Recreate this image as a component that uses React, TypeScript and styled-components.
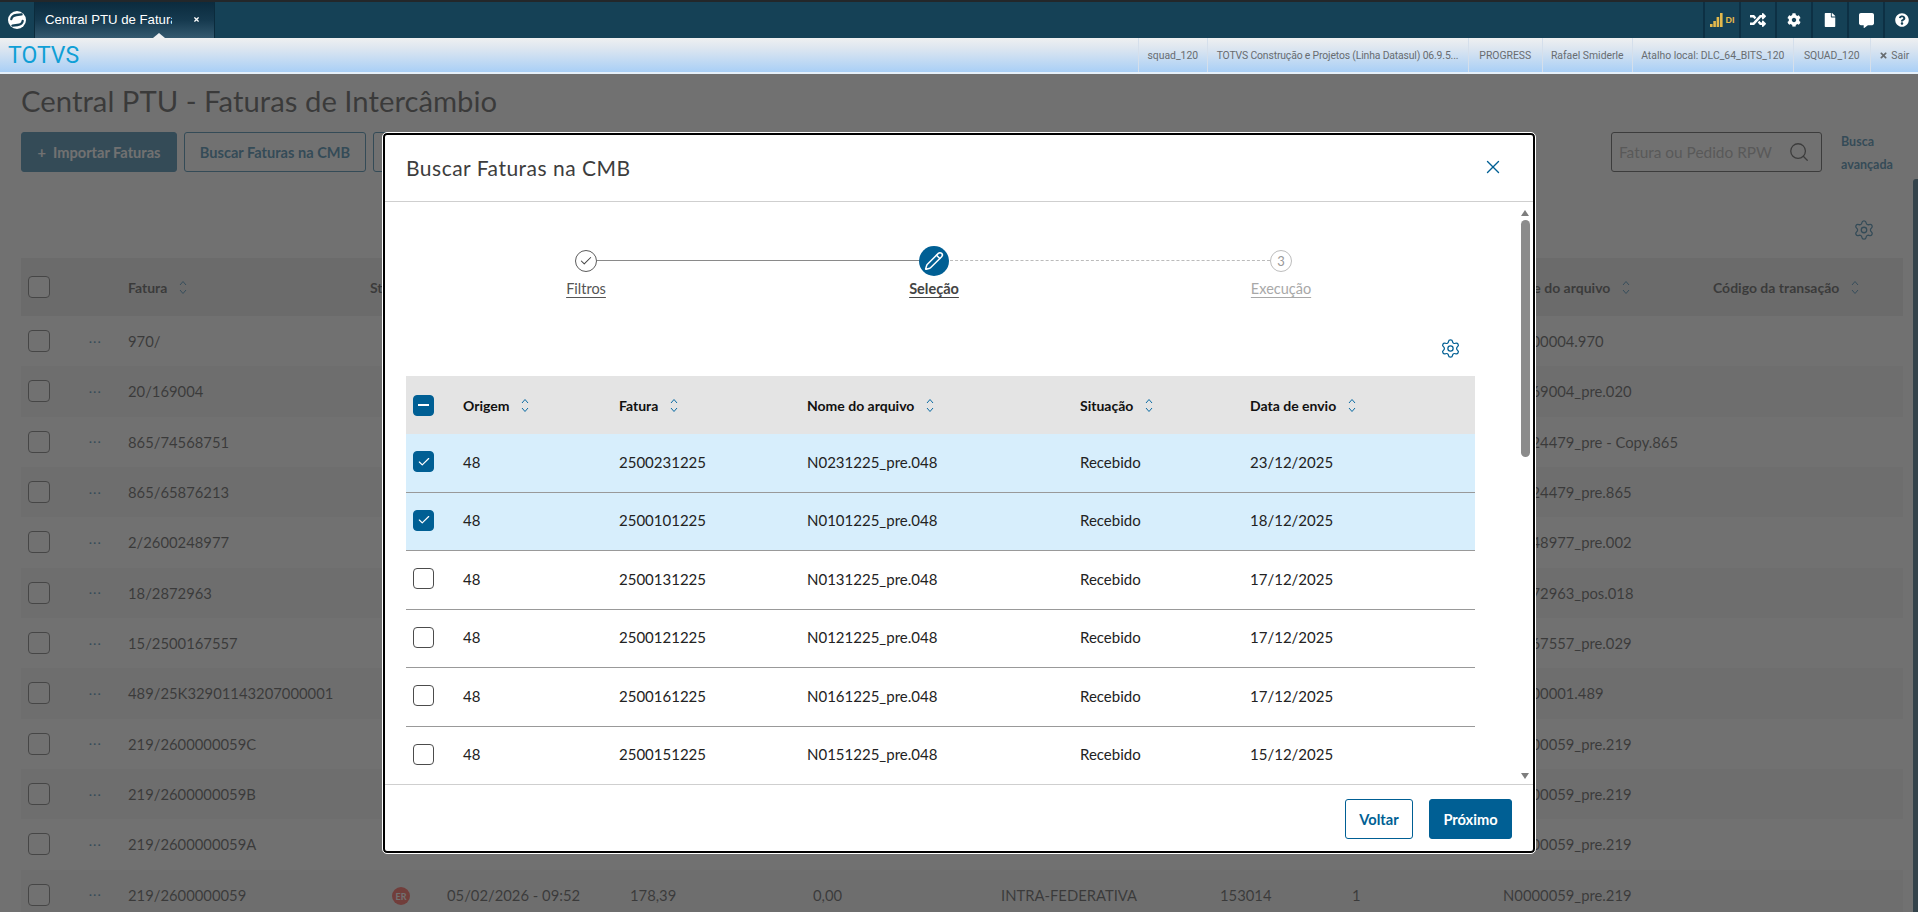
import React from "react";
import styled, { createGlobalStyle } from "styled-components";
import { Check, Pencil, Search, Settings, X } from "lucide-react";
import { FaRandom, FaCog, FaFile, FaCommentAlt, FaQuestionCircle, FaTimes } from "react-icons/fa";

const Global = createGlobalStyle`
  html, body { margin: 0; padding: 0; height: 100%; overflow: hidden; background: #fff; }
  * { box-sizing: border-box; }
  body { font-family: "Lato", "Noto Sans", sans-serif; color: #1c1c1c; }
`;

const Shell = styled.div`
  position: relative;
  width: 1918px;
  height: 912px;
  overflow: hidden;
  display: flex;
  flex-direction: column;
`;

const TopBar = styled.header`
  flex: 0 0 38px;
  display: flex;
  align-items: stretch;
  background: #154156;
  border-top: 2px solid #23272a;
`;

const LogoCell = styled.div`
  width: 35px;
  display: flex;
  align-items: center;
  justify-content: center;
  border-right: 1px solid #0b2b3c;
`;

const Tab = styled.div`
  position: relative;
  width: 180px;
  display: flex;
  align-items: center;
  padding: 0 0 2px 10px;
  background: linear-gradient(180deg, #0b2b3e 0%, #15394e 50%, #34596f 100%);
  border-right: 1px solid #0b2b3c;
  color: #fff;
  font: 13.2px "Liberation Sans", sans-serif;
  &::after {
    content: "";
    position: absolute;
    left: 118px;
    bottom: 0;
    border-left: 6px solid transparent;
    border-right: 6px solid transparent;
    border-bottom: 5px solid #eef0f2;
  }
`;

const TabLabel = styled.span`
  width: 127px;
  overflow: hidden;
  white-space: nowrap;
`;

const TabClose = styled.span`
  margin-left: 21px;
  display: flex;
`;

const TopSpacer = styled.div`
  flex: 1;
`;

const TopIcon = styled.div<{ $w: number }>`
  width: ${(p) => p.$w}px;
  display: flex;
  align-items: center;
  justify-content: center;
  gap: 3px;
  color: #fff;
  border-left: 2px solid #0d3044;
`;

const SignalText = styled.span`
  color: #e3b94d;
  font: bold 9px "Liberation Sans", sans-serif;
`;

const SubBar = styled.div`
  flex: 0 0 36px;
  display: flex;
  align-items: stretch;
  background: linear-gradient(180deg, #eff0f1 0%, #dde6f0 30%, #a9cff6 100%);
  border-bottom: 2px solid #e6f0fa;
`;

const Brand = styled.div`
  flex: 1;
  padding: 2px 0 0 8px;
  color: #0f9fd6;
  font: 23px/32px "Roboto", "Liberation Sans", sans-serif;
`;

const InfoCell = styled.div<{ $w: number; $tight?: boolean }>`
  width: ${(p) => p.$w}px;
  display: flex;
  align-items: center;
  justify-content: center;
  gap: 3px;
  white-space: nowrap;
  border-left: 1px solid #d5dfeb;
  color: #686c70;
  letter-spacing: ${(p) => (p.$tight ? "-0.15px" : "0")};
  font: 10.4px "Roboto", "Liberation Sans", sans-serif;
`;

const Page = styled.main`
  flex: 1;
  padding: 0 15px 0 21px;
  background: #fff;
  min-height: 0;
`;

const Title = styled.h1`
  margin: 6px 0 0;
  font: 400 29.3px/42px "Lato", sans-serif;
  color: #1c1c1c;
`;

const ActionRow = styled.div`
  margin-top: 10px;
  height: 40px;
  display: flex;
  align-items: stretch;
`;

const PageButton = styled.button<{ $primary?: boolean; $w: number }>`
  width: ${(p) => p.$w}px;
  margin-right: 7px;
  padding: 0;
  border-radius: 3px;
  border: 1px solid #005f94;
  background: ${(p) => (p.$primary ? "#005f94" : "#fff")};
  color: ${(p) => (p.$primary ? "#fff" : "#005f94")};
  font: 700 14.6px "Lato", sans-serif;
`;

const ActionSpacer = styled.div`
  flex: 1;
`;

const SearchBox = styled.div`
  width: 211px;
  margin-right: 19px;
  display: flex;
  align-items: center;
  justify-content: space-between;
  padding: 0 11px 0 7px;
  border: 1px solid #222;
  border-radius: 3px;
  color: #9a9a9a;
  font: 15.4px "Lato", sans-serif;
`;

const AdvancedLink = styled.div`
  width: 62px;
  margin-top: -2px;
  color: #005f94;
  font: 700 12.5px/23px "Lato", sans-serif;
`;

const GearRow = styled.div<{ $top: number; $pad: number; $h: number }>`
  display: flex;
  justify-content: flex-end;
  align-items: flex-start;
  height: ${(p) => p.$h}px;
  padding-top: ${(p) => p.$top}px;
  padding-right: ${(p) => p.$pad}px;
  color: #005f94;
`;

const BgGrid = "68px 39px 242px 77px 183px 183px 188px 219px 132px 151px 210px 190px";

const BgHead = styled.div`
  display: grid;
  grid-template-columns: ${BgGrid};
  align-items: center;
  height: 58px;
  background: #e4e4e4;
  font: 700 14px "Lato", sans-serif;
`;

const BgRow = styled.div<{ $even: boolean }>`
  display: grid;
  grid-template-columns: ${BgGrid};
  align-items: center;
  height: 50.33px;
  background: ${(p) => (p.$even ? "#f3f3f3" : "#fff")};
  font: 14.8px "Lato", sans-serif;
`;

const BgCheckCell = styled.div`
  padding-left: 7px;
  display: flex;
`;

const BgDots = styled.div`
  color: #005f94;
  font: 700 12px/12px "Lato", sans-serif;
  letter-spacing: 1.5px;
  margin-top: -5px;
`;

const Cell = styled.div`
  white-space: nowrap;
`;

const SortWrap = styled.span`
  display: inline-flex;
  align-items: center;
  gap: 12px;
  white-space: nowrap;
`;

const Badge = styled.span`
  display: inline-flex;
  align-items: center;
  justify-content: center;
  width: 18px;
  height: 18px;
  margin-left: 22px;
  border-radius: 50%;
  background: #ff2a20;
  color: #fff;
  font: 700 9px "Lato", sans-serif;
`;

const Box = styled.span<{ $on?: boolean; $size: number }>`
  width: ${(p) => p.$size}px;
  height: ${(p) => p.$size}px;
  display: inline-flex;
  align-items: center;
  justify-content: center;
  flex: none;
  border-radius: 4px;
  border: 1px solid ${(p) => (p.$on ? "#005f94" : "#4c4c4c")};
  background: ${(p) => (p.$on ? "#005f94" : "#fff")};
  color: #fff;
`;

const Minus = styled.span`
  width: 11px;
  height: 2px;
  background: #fff;
`;

const PageScroll = styled.div`
  position: absolute;
  right: 0;
  top: 179px;
  bottom: 0;
  width: 5px;
  background: #00405f;
  border-radius: 3px 0 0 0;
`;

const Backdrop = styled.div`
  position: absolute;
  left: 0;
  right: 0;
  top: 74px;
  bottom: 0;
  background: rgba(68, 68, 68, 0.76);
`;

const Modal = styled.section`
  position: absolute;
  left: 383px;
  top: 133px;
  width: 1152px;
  height: 720px;
  display: flex;
  flex-direction: column;
  background: #fff;
  border: 2px solid #000;
  border-radius: 4px;
  outline: 1px solid #fff;
`;

const ModalHead = styled.div`
  flex: 0 0 67px;
  display: flex;
  align-items: center;
  justify-content: space-between;
  padding: 0 29px 2px 21px;
  border-bottom: 1px solid #cfcfcf;
  font: 400 21px "Lato", sans-serif;
  color: #3d3d3d;
  letter-spacing: .5px;
`;

const CloseIcon = styled.span`
  display: flex;
  color: #005f94;
`;

const ModalBody = styled.div`
  position: relative;
  flex: 1;
  min-height: 0;
  overflow: hidden;
  padding: 0 58px 0 21px;
`;

const Stepper = styled.div`
  display: flex;
  align-items: flex-start;
  padding: 44px 0 0 169px;
  height: 136px;
`;

const Step = styled.div`
  position: relative;
  flex: none;
  width: 22px;
  display: flex;
  flex-direction: column;
  align-items: center;
`;

const StepCircle = styled.span<{ $kind: "done" | "active" | "todo" }>`
  height: 30px;
  display: flex;
  align-items: center;
  justify-content: center;
  flex: none;
  & > span {
    display: flex;
    align-items: center;
    justify-content: center;
    border-radius: 50%;
    width: ${(p) => (p.$kind === "active" ? 30 : 22)}px;
    height: ${(p) => (p.$kind === "active" ? 30 : 22)}px;
    background: ${(p) => (p.$kind === "active" ? "#005f94" : "#fff")};
    border: ${(p) =>
      p.$kind === "active" ? "none" : p.$kind === "done" ? "1px solid #5c5c5c" : "1px solid #bdbdbd"};
    color: ${(p) => (p.$kind === "active" ? "#fff" : p.$kind === "done" ? "#444" : "#999")};
    font: 400 13px "Lato", sans-serif;
  }
`;

const StepLabel = styled.span<{ $kind: "done" | "active" | "todo" }>`
  margin-top: 4px;
  white-space: nowrap;
  text-decoration: underline;
  text-underline-offset: 3px;
  font: ${(p) => (p.$kind === "active" ? 700 : 400)} 14.5px/17px "Lato", sans-serif;
  color: ${(p) => (p.$kind === "todo" ? "#a8a8a8" : p.$kind === "active" ? "#444" : "#555")};
`;

const StepLine = styled.div<{ $dashed?: boolean; $w: number }>`
  width: ${(p) => p.$w}px;
  margin-top: 14px;
  flex: none;
  border-top: 1.5px ${(p) => (p.$dashed ? "dashed #bbb" : "solid #8a8a8a")};
`;

const Grid = "57px 156px 188px 273px 170px 226px";

const Head = styled.div`
  display: grid;
  grid-template-columns: ${Grid};
  align-items: center;
  height: 58px;
  background: #e4e4e4;
  font: 700 14px "Lato", sans-serif;
  color: #111;
`;

const Row = styled.div<{ $sel: boolean }>`
  display: grid;
  grid-template-columns: ${Grid};
  align-items: center;
  height: 58.5px;
  padding-bottom: 2px;
  background: ${(p) => (p.$sel ? "#d7eefc" : "#fff")};
  border-bottom: 1px solid #999;
  font: 15px "Lato", sans-serif;
  color: #222;
`;

const CheckCell = styled.div`
  padding-left: 7px;
  display: flex;
`;

const Scroll = styled.div`
  position: absolute;
  right: 3px;
  top: 0;
  bottom: 0;
  width: 10px;
  display: flex;
  flex-direction: column;
  align-items: center;
  padding-top: 8px;
`;

const ArrowUp = styled.span`
  border-left: 4.5px solid transparent;
  border-right: 4.5px solid transparent;
  border-bottom: 6px solid #7d7d7d;
`;

const ArrowDown = styled(ArrowUp)`
  transform: rotate(180deg);
  margin-top: 316px;
`;

const Thumb = styled.span`
  margin-top: 4px;
  width: 9px;
  height: 237px;
  border-radius: 5px;
  background: #8b8b8b;
`;

const ModalFoot = styled.div`
  flex: 0 0 67px;
  display: flex;
  align-items: flex-start;
  justify-content: flex-end;
  gap: 16px;
  padding: 14px 21px 0 0;
  border-top: 1px solid #cfcfcf;
`;

const FootButton = styled.button<{ $primary?: boolean; $w: number }>`
  width: ${(p) => p.$w}px;
  height: 40px;
  padding: 0;
  border-radius: 3px;
  border: 1px solid #005f94;
  background: ${(p) => (p.$primary ? "#005f94" : "#fff")};
  color: ${(p) => (p.$primary ? "#fff" : "#005f94")};
  font: 700 14.6px "Lato", sans-serif;
`;

const Sort = () => (
  <svg width="8" height="15" viewBox="0 0 8 15" fill="none" stroke="#0b6ba3" strokeWidth="1">
    <path d="M1 5 4 1.5 7 5M1 10 4 13.5 7 10" />
  </svg>
);

const Logo = () => (
  <svg width="20" height="20" viewBox="0 0 20 20">
    <circle cx="10" cy="10" r="9" fill="#fff" />
    <path d="M4.3 9.2Q4.8 5.6 9.5 5L14.6 4.4" fill="none" stroke="#154156" strokeWidth="2.3" strokeLinecap="round" />
    <path d="M15.7 10.8Q15.2 14.4 10.5 15L5.4 15.6" fill="none" stroke="#154156" strokeWidth="2.3" strokeLinecap="round" />
  </svg>
);

const SignalBars = () => (
  <svg width="13" height="14" viewBox="0 0 13 14" fill="#e3b94d">
    <rect x="0" y="11" width="2.6" height="3" />
    <rect x="3.3" y="8" width="2.6" height="6" />
    <rect x="6.6" y="4" width="2.6" height="10" />
    <rect x="10" y="0" width="2.6" height="14" />
  </svg>
);

const bgRows: [string, string][] = [
  ["970/", "N0000004.970"],
  ["20/169004", "N0169004_pre.020"],
  ["865/74568751", "N0224479_pre - Copy.865"],
  ["865/65876213", "N0224479_pre.865"],
  ["2/2600248977", "N0248977_pre.002"],
  ["18/2872963", "N2872963_pos.018"],
  ["15/2500167557", "N0167557_pre.029"],
  ["489/25K32901143207000001", "N0000001.489"],
  ["219/2600000059C", "N0000059_pre.219"],
  ["219/2600000059B", "N0000059_pre.219"],
  ["219/2600000059A", "N0000059_pre.219"],
  ["219/2600000059", "N0000059_pre.219"],
];

const rows = [
  ["48", "2500231225", "N0231225_pre.048", "Recebido", "23/12/2025", true],
  ["48", "2500101225", "N0101225_pre.048", "Recebido", "18/12/2025", true],
  ["48", "2500131225", "N0131225_pre.048", "Recebido", "17/12/2025", false],
  ["48", "2500121225", "N0121225_pre.048", "Recebido", "17/12/2025", false],
  ["48", "2500161225", "N0161225_pre.048", "Recebido", "17/12/2025", false],
  ["48", "2500151225", "N0151225_pre.048", "Recebido", "15/12/2025", false],
] as const;

const heads = ["Origem", "Fatura", "Nome do arquivo", "Situação", "Data de envio"];

export default function App() {
  return (
    <Shell>
      <Global />
      <TopBar>
        <LogoCell><Logo /></LogoCell>
        <Tab>
          <TabLabel>Central PTU de Fatura</TabLabel>
          <TabClose><FaTimes size={7} /></TabClose>
        </Tab>
        <TopSpacer />
        <TopIcon $w={36}><SignalBars /><SignalText>DI</SignalText></TopIcon>
        <TopIcon $w={36}><FaRandom size={16} /></TopIcon>
        <TopIcon $w={36}><FaCog size={14} /></TopIcon>
        <TopIcon $w={36}><FaFile size={14} /></TopIcon>
        <TopIcon $w={36}><FaCommentAlt size={15} /></TopIcon>
        <TopIcon $w={35}><FaQuestionCircle size={14} /></TopIcon>
      </TopBar>
      <SubBar>
        <Brand>TOTVS</Brand>
        <InfoCell $w={68.5}>squad_120</InfoCell>
        <InfoCell $w={261} $tight>TOTVS Construção e Projetos (Linha Datasul) 06.9.5...</InfoCell>
        <InfoCell $w={74.5}>PROGRESS</InfoCell>
        <InfoCell $w={89.5}>Rafael Smiderle</InfoCell>
        <InfoCell $w={161.5}>Atalho local: DLC_64_BITS_120</InfoCell>
        <InfoCell $w={76.5}>SQUAD_120</InfoCell>
        <InfoCell $w={48.5}><FaTimes size={9} />Sair</InfoCell>
      </SubBar>
      <Page>
        <Title>Central PTU - Faturas de Intercâmbio</Title>
        <ActionRow>
          <PageButton $primary $w={156}>+&nbsp; Importar Faturas</PageButton>
          <PageButton $w={182}>Buscar Faturas na CMB</PageButton>
          <PageButton $w={140} aria-hidden="true" />
          <ActionSpacer />
          <SearchBox>
            Fatura ou Pedido RPW
            <Search size={22} strokeWidth={1.4} color="#222" />
          </SearchBox>
          <AdvancedLink>Busca avançada</AdvancedLink>
        </ActionRow>
        <GearRow $top={47} $pad={28} $h={86}>
          <Settings size={22} strokeWidth={1.4} />
        </GearRow>
        <BgHead>
          <BgCheckCell><Box $size={22} /></BgCheckCell>
          <span />
          <SortWrap>Fatura <Sort /></SortWrap>
          <Cell>Status</Cell>
          <span />
          <span />
          <span />
          <span />
          <span />
          <span />
          <SortWrap>Nome do arquivo <Sort /></SortWrap>
          <SortWrap>Código da transação <Sort /></SortWrap>
        </BgHead>
        {bgRows.map(([fatura, file], i) => {
          const last = i === bgRows.length - 1;
          return (
            <BgRow key={i} $even={i % 2 === 1}>
              <BgCheckCell><Box $size={22} /></BgCheckCell>
              <BgDots>...</BgDots>
              <Cell>{fatura}</Cell>
              <Cell>{last && <Badge>ER</Badge>}</Cell>
              <Cell>{last && "05/02/2026 - 09:52"}</Cell>
              <Cell>{last && "178,39"}</Cell>
              <Cell>{last && "0,00"}</Cell>
              <Cell>{last && "INTRA-FEDERATIVA"}</Cell>
              <Cell>{last && "153014"}</Cell>
              <Cell>{last && "1"}</Cell>
              <Cell>{file}</Cell>
              <Cell />
            </BgRow>
          );
        })}
      </Page>
      <PageScroll />
      <Backdrop />
      <Modal>
        <ModalHead>
          Buscar Faturas na CMB
          <CloseIcon><X size={22} strokeWidth={1.5} /></CloseIcon>
        </ModalHead>
        <ModalBody>
          <Stepper>
            <Step>
              <StepCircle $kind="done"><span><Check size={14} strokeWidth={1.8} /></span></StepCircle>
              <StepLabel $kind="done">Filtros</StepLabel>
            </Step>
            <StepLine $w={326} />
            <Step>
              <StepCircle $kind="active"><span><Pencil size={20} strokeWidth={1.8} /></span></StepCircle>
              <StepLabel $kind="active">Seleção</StepLabel>
            </Step>
            <StepLine $dashed $w={325} />
            <Step>
              <StepCircle $kind="todo"><span>3</span></StepCircle>
              <StepLabel $kind="todo">Execução</StepLabel>
            </Step>
          </Stepper>
          <GearRow $top={0} $pad={14} $h={38}>
            <Settings size={21} strokeWidth={1.4} />
          </GearRow>
          <Head>
            <CheckCell><Box $on $size={21}><Minus /></Box></CheckCell>
            {heads.map((h) => (
              <SortWrap key={h}>{h} <Sort /></SortWrap>
            ))}
          </Head>
          {rows.map(([origem, fatura, nome, sit, data, sel]) => (
            <Row key={fatura} $sel={sel}>
              <CheckCell>
                <Box $on={sel} $size={21}>{sel && <Check size={14} strokeWidth={2} />}</Box>
              </CheckCell>
              <Cell>{origem}</Cell>
              <Cell>{fatura}</Cell>
              <Cell>{nome}</Cell>
              <Cell>{sit}</Cell>
              <Cell>{data}</Cell>
            </Row>
          ))}
          <Scroll>
            <ArrowUp />
            <Thumb />
            <ArrowDown />
          </Scroll>
        </ModalBody>
        <ModalFoot>
          <FootButton $w={68}>Voltar</FootButton>
          <FootButton $primary $w={83}>Próximo</FootButton>
        </ModalFoot>
      </Modal>
    </Shell>
  );
}
